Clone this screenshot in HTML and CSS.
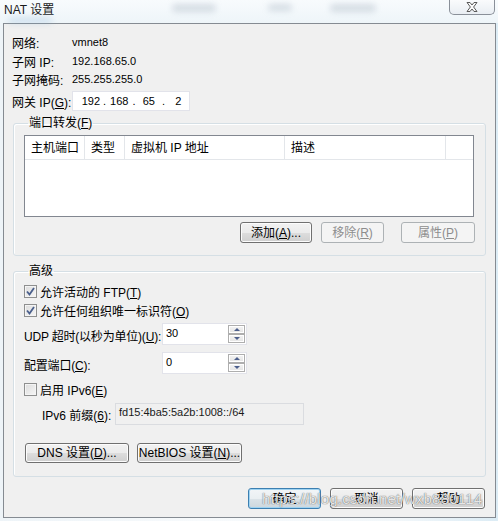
FILE: index.html
```html
<!DOCTYPE html>
<html lang="zh-CN">
<head>
    <meta charset="UTF-8">
    <title>NAT 设置</title>
    <link rel="stylesheet" href="styles.css">
</head>
<body>
    <div class="window">
        <div class="titlebar">
            <span class="title">NAT 设置</span>
            <span class="blur b1"></span>
            <span class="blur b2"></span>
            <span class="blur b3"></span>
            <span class="blur b4"></span>
            <div class="close">
                <svg width="12" height="10" viewBox="0 0 12 10">
                    <path d="M1 0.5 H4 L6 3 L8 0.5 H11 L7.6 5 L11 9.5 H8 L6 7 L4 9.5 H1 L4.4 5 Z" fill="#fafafa" stroke="#5a5a5a" stroke-width="1"/>
                </svg>
            </div>
        </div>
        <div class="client">
            <div class="info">
                <div class="info-row first"><span class="lbl">网络:</span><span class="val">vmnet8</span></div>
                <div class="info-row"><span class="lbl">子网 IP:</span><span class="val">192.168.65.0</span></div>
                <div class="info-row"><span class="lbl">子网掩码:</span><span class="val">255.255.255.0</span></div>
                <div class="info-row gw">
                    <span class="lbl">网关 IP(<u>G</u>):</span>
                    <div class="ip-input">
                        <span class="oct">192</span><span class="dot">.</span><span class="oct">168</span><span class="dot">.</span><span class="oct">65</span><span class="dot">.</span><span class="oct">2</span>
                    </div>
                </div>
            </div>

            <fieldset class="group ports">
                <legend>端口转发(<u>F</u>)</legend>
                <div class="listview">
                    <div class="lv-head">
                        <div class="col c1">主机端口</div>
                        <div class="col c2">类型</div>
                        <div class="col c3">虚拟机 IP 地址</div>
                        <div class="col c4">描述</div>
                        <div class="col c5"></div>
                    </div>
                </div>
                <div class="btn-row">
                    <button class="btn w-add">添加(<u>A</u>)...</button>
                    <button class="btn w-del" disabled>移除(<u>R</u>)</button>
                    <button class="btn w-prop" disabled>属性(<u>P</u>)</button>
                </div>
            </fieldset>

            <fieldset class="group adv">
                <legend>高级</legend>
                <label class="check row-cb1">
                    <span class="box checked">
                        <svg width="9" height="9" viewBox="0 0 9 9"><path d="M1 4.5 L3.5 7.5 L8 1" fill="none" stroke="#4a5f8c" stroke-width="1.8"/></svg>
                    </span>
                    <span>允许活动的 FTP(<u>T</u>)</span>
                </label>
                <label class="check row-cb2">
                    <span class="box checked">
                        <svg width="9" height="9" viewBox="0 0 9 9"><path d="M1 4.5 L3.5 7.5 L8 1" fill="none" stroke="#4a5f8c" stroke-width="1.8"/></svg>
                    </span>
                    <span>允许任何组织唯一标识符(<u>O</u>)</span>
                </label>
                <div class="field-row udp">
                    <span class="flbl">UDP 超时(以秒为单位)(<u>U</u>):</span>
                    <div class="spin">
                        <span class="spin-val">30</span>
                        <div class="spin-btns">
                            <span class="sb"><i class="up"></i></span>
                            <span class="sb"><i class="down"></i></span>
                        </div>
                    </div>
                </div>
                <div class="field-row cfg">
                    <span class="flbl">配置端口(<u>C</u>):</span>
                    <div class="spin">
                        <span class="spin-val">0</span>
                        <div class="spin-btns">
                            <span class="sb"><i class="up"></i></span>
                            <span class="sb"><i class="down"></i></span>
                        </div>
                    </div>
                </div>
                <label class="check row-cb3">
                    <span class="box"></span>
                    <span>启用 IPv6(<u>E</u>)</span>
                </label>
                <div class="field-row v6">
                    <span class="v6lbl">IPv6 前缀(<u>6</u>):</span>
                    <div class="ro-input">fd15:4ba5:5a2b:1008::/64</div>
                </div>
                <div class="btn-row left">
                    <button class="btn w-dns">DNS 设置(<u>D</u>)...</button>
                    <button class="btn w-nb">NetBIOS 设置(<u>N</u>)...</button>
                </div>
            </fieldset>

            <div class="dlg-buttons">
                <button class="btn default">确定</button>
                <button class="btn">取消</button>
                <button class="btn">帮助</button>
            </div>
        </div>
        <div class="watermark">https://blog.csdn.net/wxb880114</div>
    </div>
</body>
</html>
```

FILE: styles.css
```css
* {
    box-sizing: border-box;
}
body {
    margin: 0;
    font-family: "Liberation Sans", "Noto Sans CJK SC", sans-serif;
    font-size: 12px;
    color: #000;
    background: #dfe9f0;
}
u {
    text-decoration: underline;
    text-underline-offset: 1px;
}
.window {
    position: relative;
    width: 498px;
    height: 521px;
    background: linear-gradient(90deg, #eef4f8 0%, #f7fafc 40%, #f2f7fa 80%, #dcecf5 100%);
    overflow: hidden;
}
.titlebar {
    position: relative;
    height: 23px;
    padding: 3px 0 0 4px;
    background: linear-gradient(180deg, #f8fbfd 0%, #eef5f9 100%);
}
.title {
    font-size: 12px;
    line-height: 14px;
    color: #1a1a1a;
}
.blur {
    position: absolute;
    border-radius: 4px;
    filter: blur(3px);
    background: rgba(120, 140, 160, 0.25);
}
.b1 { left: 172px; top: 4px; width: 44px; height: 8px; }
.b2 { left: 268px; top: 4px; width: 24px; height: 7px; }
.b3 { left: 330px; top: 4px; width: 46px; height: 8px; }
.b4 { left: 8px; top: 18px; width: 44px; height: 5px; background: rgba(120, 170, 210, 0.3); }
.close {
    position: absolute;
    left: 449px;
    top: -1px;
    width: 46px;
    height: 16px;
    border: 1px solid #8a9099;
    border-top: none;
    border-radius: 0 0 5px 5px;
    background: linear-gradient(180deg, #fbfcfd 0%, #e9eef3 100%);
    display: flex;
    align-items: center;
    justify-content: center;
}
.client {
    margin-left: 3px;
    width: 493px;
    height: 495px;
    border: 1px solid #858b92;
    background: #f0f0f0;
    padding: 0 9px;
}

/* info */
.info {
    padding-top: 9px;
    margin-left: -1px;
}
.info-row {
    display: flex;
    align-items: center;
    height: 18px;
}
.info-row.first {
    margin-bottom: 1px;
}
.lbl {
    width: 60px;
}
.val {
    font-size: 11px;
}
.info-row.gw {
    height: 20px;
    margin-top: 3px;
}
.ip-input {
    width: 118px;
    height: 20px;
    background: #fff;
    border: 1px solid #e2e3ea;
    display: flex;
    align-items: center;
    padding-left: 8px;
    font-size: 11px;
}
.oct {
    width: 22px;
    text-align: center;
}
.oct:first-child {
    width: 20px;
}
.dot {
    width: 8px;
    text-align: center;
}

/* group boxes */
.group {
    margin: 0;
    border: 1px solid #d5dfe5;
    border-radius: 3px;
    padding: 0 10px;
    box-shadow: inset 1px 1px 0 #fff;
}
.group legend {
    margin-left: 4px;
    padding: 0 1px;
    line-height: 14px;
    height: 14px;
}
.ports {
    margin-top: 5px;
    padding-top: 5px;
    padding-bottom: 12px;
}
.listview {
    width: 450px;
    height: 82px;
    border: 1px solid #828790;
    background: #fff;
}
.lv-head {
    display: flex;
    height: 24px;
    border-bottom: 1px solid #e3e6ea;
}
.col {
    border-right: 1px solid #e3e6ea;
    padding: 4px 0 0 6px;
    line-height: 16px;
}
.c1 { width: 60px; }
.c2 { width: 40px; }
.c3 { width: 160px; }
.c4 { width: 161px; }
.c5 { flex: 1; border-right: none; }

.btn-row {
    display: flex;
    justify-content: flex-end;
    margin-top: 5px;
}
.btn-row.left {
    justify-content: flex-start;
    margin-top: 18px;
    margin-left: 1px;
}
.btn {
    height: 21px;
    padding: 0;
    font-family: inherit;
    font-size: 12px;
    color: #000;
    border: 1px solid #707070;
    border-radius: 3px;
    background: linear-gradient(180deg, #f2f2f2 0%, #ebebeb 50%, #dddddd 51%, #cfcfcf 100%);
    box-shadow: inset 0 0 0 1px #fcfcfc;
    line-height: 18px;
}
.btn:disabled {
    color: #8d8d8d;
    border-color: #adb2b5;
    background: #f4f4f4;
    box-shadow: none;
}
.w-add { width: 72px; }
.w-del { width: 63px; margin-left: 9px; }
.w-prop { width: 74px; margin-left: 17px; }
.w-dns { width: 104px; height: 20px; }
.w-nb { width: 105px; height: 20px; margin-left: 8px; }

/* advanced */
.adv {
    margin-top: 8px;
    padding-top: 5px;
    padding-bottom: 13px;
}
.check {
    display: flex;
    align-items: center;
    height: 16px;
}
.row-cb2 {
    margin-top: 3px;
}
.row-cb3 {
    margin-top: 7px;
}
.box {
    width: 13px;
    height: 13px;
    border: 1px solid #8e8f8f;
    background: linear-gradient(135deg, #dcdcdc 0%, #f6f6f6 100%);
    box-shadow: inset 0 0 0 1px #f4f4f4;
    margin-right: 3px;
    display: flex;
    align-items: center;
    justify-content: center;
}
.field-row {
    display: flex;
    align-items: center;
}
.udp {
    margin-top: 5px;
}
.cfg {
    margin-top: 7px;
}
.flbl {
    flex: none;
    width: 138px;
    padding-top: 2px;
    white-space: nowrap;
    letter-spacing: -0.2px;
}
.spin {
    width: 85px;
    height: 22px;
    background: #fff;
    border: 1px solid #e2e3ea;
    display: flex;
    justify-content: space-between;
    padding: 1px 1px 1px 3px;
}
.spin-val {
    font-size: 11px;
    line-height: 16px;
}
.spin-btns {
    display: flex;
    flex-direction: column;
    width: 17px;
}
.sb {
    flex: 1;
    border: 1px solid #aeaeae;
    background: linear-gradient(180deg, #f4f4f4, #e4e4e4);
    box-shadow: inset 0 0 0 1px #fff;
    display: flex;
    align-items: center;
    justify-content: center;
}
.sb i {
    width: 0;
    height: 0;
    border-left: 3px solid transparent;
    border-right: 3px solid transparent;
}
.sb .up {
    border-bottom: 3px solid #4c5f8c;
}
.sb .down {
    border-top: 3px solid #4c5f8c;
}
.v6 {
    margin-top: 6px;
}
.v6lbl {
    width: 91px;
    padding-left: 18px;
}
.ro-input {
    width: 189px;
    height: 22px;
    border: 1px solid #dadce0;
    background: #f0f0f0;
    padding: 2px 0 0 3px;
    font-size: 11px;
    color: #1a1a1a;
}

/* dialog buttons */
.dlg-buttons {
    display: flex;
    justify-content: flex-end;
    gap: 9px;
    margin-top: 11px;
    padding-right: 1px;
}
.dlg-buttons .btn {
    width: 73px;
}
.btn.default {
    border-color: #3c7fb1;
    box-shadow: inset 0 0 0 1px #9fd3f2;
    background: linear-gradient(180deg, #f2f5f7 0%, #eaeff2 50%, #dbe3e8 51%, #cdd7dd 100%);
}

.watermark {
    position: absolute;
    left: 262px;
    top: 490px;
    font-family: "Liberation Sans", sans-serif;
    font-size: 15px;
    color: rgba(255, 255, 255, 0.85);
    text-shadow: 0 0 1px rgba(60, 60, 60, 0.7), 0 0 1px rgba(60, 60, 60, 0.5);
    letter-spacing: 0.2px;
}
```
